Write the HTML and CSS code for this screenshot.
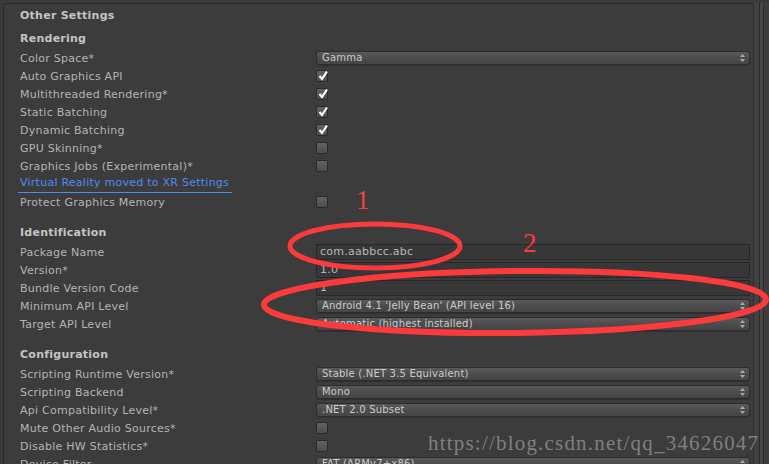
FILE: index.html
```html
<!DOCTYPE html>
<html lang="en">
<head>
    <meta charset="UTF-8">
    <title>Other Settings</title>
    <link rel="stylesheet" href="styles.css">
</head>
<body>

<div class="window">
    <div class="panel">
        <div class="title">Other Settings</div>

        <div class="section">Rendering</div>
        <div class="row"><span class="label">Color Space*</span><div class="popup">Gamma<span class="arrows"></span></div></div>
        <div class="row"><span class="label">Auto Graphics API</span><span class="check on"></span></div>
        <div class="row"><span class="label">Multithreaded Rendering*</span><span class="check on"></span></div>
        <div class="row"><span class="label">Static Batching</span><span class="check on"></span></div>
        <div class="row"><span class="label">Dynamic Batching</span><span class="check on"></span></div>
        <div class="row"><span class="label">GPU Skinning*</span><span class="check"></span></div>
        <div class="row"><span class="label">Graphics Jobs (Experimental)*</span><span class="check"></span></div>
        <div class="row"><span class="label link">Virtual Reality moved to XR Settings</span></div>
        <div class="row"><span class="label">Protect Graphics Memory</span><span class="check"></span></div>

        <div class="section spaced">Identification</div>
        <div class="row"><span class="label">Package Name</span><div class="field">com.aabbcc.abc</div></div>
        <div class="row"><span class="label">Version*</span><div class="field">1.0</div></div>
        <div class="row"><span class="label">Bundle Version Code</span><div class="field">1</div></div>
        <div class="row"><span class="label">Minimum API Level</span><div class="popup">Android 4.1 'Jelly Bean' (API level 16)<span class="arrows"></span></div></div>
        <div class="row"><span class="label">Target API Level</span><div class="popup">Automatic (highest installed)<span class="arrows"></span></div></div>

        <div class="section spaced">Configuration</div>
        <div class="row"><span class="label">Scripting Runtime Version*</span><div class="popup">Stable (.NET 3.5 Equivalent)<span class="arrows"></span></div></div>
        <div class="row"><span class="label">Scripting Backend</span><div class="popup">Mono<span class="arrows"></span></div></div>
        <div class="row"><span class="label">Api Compatibility Level*</span><div class="popup">.NET 2.0 Subset<span class="arrows"></span></div></div>
        <div class="row"><span class="label">Mute Other Audio Sources*</span><span class="check"></span></div>
        <div class="row"><span class="label">Disable HW Statistics*</span><span class="check"></span></div>
        <div class="row"><span class="label">Device Filter</span><div class="popup">FAT (ARMv7+x86)<span class="arrows"></span></div></div>
    </div>
    <div class="scroll-edge"></div>
</div>

<!-- hand-drawn annotations -->
<div class="mark one">1</div>
<div class="mark two">2</div>
<svg class="rings" width="769" height="464" viewBox="0 0 769 464">
    <ellipse cx="375" cy="246" rx="85" ry="22" fill="none" stroke="#ff3a3a" stroke-width="5"/>
    <ellipse cx="515" cy="302" rx="251" ry="31" fill="none" stroke="#ff3a3a" stroke-width="6" transform="rotate(-0.6 515 302)"/>
</svg>

<div class="watermark">https://blog.csdn.net/qq_34626047</div>

</body>
</html>
```

FILE: styles.css
```css
body {
    margin: 0;
    background-color: #3a3a3a;
    font-family: 'DejaVu Sans', sans-serif;
    font-size: 11px;
    letter-spacing: 0.25px;
    color: #b4b4b4;
    width: 769px;
    height: 464px;
    overflow: hidden;
    position: relative;
}

.window {
    display: flex;
    padding: 3px 0 0 3px;
    height: 461px;
}

.panel {
    flex: 0 0 751px;
    background-color: #3c3c3c;
    border-top: 1px solid #2b2b2b;
    border-left: 1px solid #2b2b2b;
    border-right: 1px solid #2e2e2e;
    border-top-right-radius: 4px;
    padding-left: 16px;
    box-sizing: border-box;
}

.scroll-edge {
    flex: 1;
    background: linear-gradient(to right, #414141 0, #414141 5px, #2a2a2a 5px, #2a2a2a 6px, #474747 6px, #474747 9px, #2c2c2c 9px, #2c2c2c 10px, #3e3e3e 10px);
}

.title {
    font-weight: bold;
    color: #c4c4c4;
    height: 18px;
    line-height: 18px;
    margin-top: 3px;
}

.section {
    font-weight: bold;
    color: #c4c4c4;
    height: 18px;
    line-height: 18px;
    margin-top: 5px;
    margin-bottom: 1px;
}

.section.spaced {
    margin-top: 13px;
}

.row {
    display: flex;
    align-items: center;
    height: 18px;
}

.label {
    flex: 0 0 296px;
    white-space: nowrap;
}

.label.link {
    flex: none;
    color: #4d8cf0;
    padding: 0 3px 2px 2px;
    margin-left: -2px;
    border-bottom: 1px solid #4d8cf0;
    line-height: 14px;
}

.check {
    width: 12px;
    height: 12px;
    box-sizing: border-box;
    border: 1px solid #2a2a2a;
    border-radius: 2px;
    background: linear-gradient(#626262, #4c4c4c);
    position: relative;
}

.check.on::after {
    content: "";
    position: absolute;
    left: 1px;
    top: -1px;
    width: 10px;
    height: 11px;
    background: url("data:image/svg+xml,%3Csvg xmlns='http://www.w3.org/2000/svg' width='10' height='11'%3E%3Cpath d='M1.5 6 L4 9 L9 1.5' fill='none' stroke='white' stroke-width='2.2'/%3E%3C/svg%3E") no-repeat;
}

.popup {
    width: 434px;
    height: 14px;
    box-sizing: border-box;
    border: 1px solid #2c2c2c;
    border-radius: 3px;
    background: linear-gradient(#5a5a5a, #4c4c4c 50%, #454545);
    color: #cbcbcb;
    font-size: 10px;
    letter-spacing: 0.2px;
    line-height: 12px;
    padding-left: 5px;
    position: relative;
    white-space: nowrap;
    box-shadow: 0 1px 0 #303030;
}

.arrows {
    position: absolute;
    right: 4px;
    top: 2px;
    width: 5px;
    height: 8px;
    background: url("data:image/svg+xml,%3Csvg xmlns='http://www.w3.org/2000/svg' width='5' height='8'%3E%3Cpath d='M0 3 L2.5 0 L5 3Z M0 5 L2.5 8 L5 5Z' fill='%23aaaaaa'/%3E%3C/svg%3E") no-repeat;
}

.field {
    width: 434px;
    height: 16px;
    box-sizing: border-box;
    border: 1px solid #272727;
    background-color: #373737;
    color: #b8b8b8;
    line-height: 14px;
    padding-left: 3px;
}

.mark {
    position: absolute;
    font-family: 'Liberation Serif', serif;
    color: #ff3a3a;
    font-size: 27px;
    line-height: 1;
}

.mark.one {
    left: 356px;
    top: 187px;
}

.mark.two {
    left: 523px;
    top: 230px;
}

.rings {
    position: absolute;
    left: 0;
    top: 0;
}

.watermark {
    position: absolute;
    left: 428px;
    top: 431px;
    font-family: 'Liberation Serif', serif;
    font-size: 21px;
    letter-spacing: 1.2px;
    color: rgba(175, 175, 175, 0.6);
    white-space: nowrap;
}
```
